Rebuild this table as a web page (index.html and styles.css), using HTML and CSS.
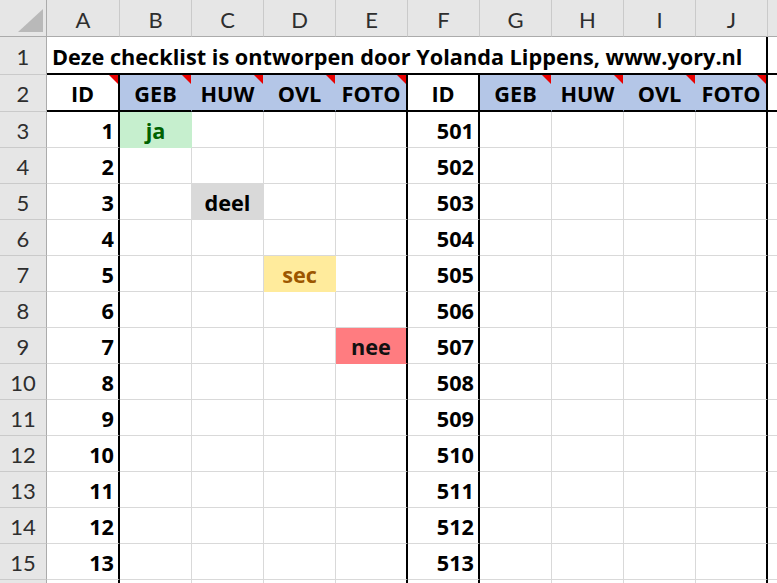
FILE: index.html
```html
<!DOCTYPE html>
<html lang="nl">
<head>
<meta charset="utf-8">
<title>Checklist</title>
<link rel="stylesheet" href="styles.css">
</head>
<body>
<div class="sheet">
  <div class="corner"><svg class="selall" width="46" height="36" viewBox="0 0 46 36"><polygon points="43,9 43,32 18,32" fill="#b9b9b9"/></svg></div>
  <div class="ch">A</div><div class="ch">B</div><div class="ch">C</div><div class="ch">D</div><div class="ch">E</div><div class="ch">F</div><div class="ch">G</div><div class="ch">H</div><div class="ch">I</div><div class="ch">J</div><div class="ch"></div>

  <div class="rh">1</div>
  <div class="c title tr tb">Deze checklist is ontworpen door Yolanda Lippens, www.yory.nl</div>
  <div class="c tb"></div>

  <div class="rh">2</div>
  <div class="c mid tr tb flag">ID</div>
  <div class="c mid blue tb flag">GEB</div>
  <div class="c mid blue tb flag">HUW</div>
  <div class="c mid blue tb flag">OVL</div>
  <div class="c mid blue tr tb flag">FOTO</div>
  <div class="c mid tr tb">ID</div>
  <div class="c mid blue tb flag">GEB</div>
  <div class="c mid blue tb flag">HUW</div>
  <div class="c mid blue tb flag">OVL</div>
  <div class="c mid blue tr tb flag">FOTO</div>
  <div class="c tb"></div>

  <div class="rh">3</div><div class="c num tr">1</div><div class="c mid ja">ja</div><div class="c"></div><div class="c"></div><div class="c tr"></div><div class="c num tr">501</div><div class="c"></div><div class="c"></div><div class="c"></div><div class="c tr"></div><div class="c"></div>
  <div class="rh">4</div><div class="c num tr">2</div><div class="c"></div><div class="c"></div><div class="c"></div><div class="c tr"></div><div class="c num tr">502</div><div class="c"></div><div class="c"></div><div class="c"></div><div class="c tr"></div><div class="c"></div>
  <div class="rh">5</div><div class="c num tr">3</div><div class="c"></div><div class="c mid deel">deel</div><div class="c"></div><div class="c tr"></div><div class="c num tr">503</div><div class="c"></div><div class="c"></div><div class="c"></div><div class="c tr"></div><div class="c"></div>
  <div class="rh">6</div><div class="c num tr">4</div><div class="c"></div><div class="c"></div><div class="c"></div><div class="c tr"></div><div class="c num tr">504</div><div class="c"></div><div class="c"></div><div class="c"></div><div class="c tr"></div><div class="c"></div>
  <div class="rh">7</div><div class="c num tr">5</div><div class="c"></div><div class="c"></div><div class="c mid sec">sec</div><div class="c tr"></div><div class="c num tr">505</div><div class="c"></div><div class="c"></div><div class="c"></div><div class="c tr"></div><div class="c"></div>
  <div class="rh">8</div><div class="c num tr">6</div><div class="c"></div><div class="c"></div><div class="c"></div><div class="c tr"></div><div class="c num tr">506</div><div class="c"></div><div class="c"></div><div class="c"></div><div class="c tr"></div><div class="c"></div>
  <div class="rh">9</div><div class="c num tr">7</div><div class="c"></div><div class="c"></div><div class="c"></div><div class="c mid nee tr">nee</div><div class="c num tr">507</div><div class="c"></div><div class="c"></div><div class="c"></div><div class="c tr"></div><div class="c"></div>
  <div class="rh">10</div><div class="c num tr">8</div><div class="c"></div><div class="c"></div><div class="c"></div><div class="c tr"></div><div class="c num tr">508</div><div class="c"></div><div class="c"></div><div class="c"></div><div class="c tr"></div><div class="c"></div>
  <div class="rh">11</div><div class="c num tr">9</div><div class="c"></div><div class="c"></div><div class="c"></div><div class="c tr"></div><div class="c num tr">509</div><div class="c"></div><div class="c"></div><div class="c"></div><div class="c tr"></div><div class="c"></div>
  <div class="rh">12</div><div class="c num tr">10</div><div class="c"></div><div class="c"></div><div class="c"></div><div class="c tr"></div><div class="c num tr">510</div><div class="c"></div><div class="c"></div><div class="c"></div><div class="c tr"></div><div class="c"></div>
  <div class="rh">13</div><div class="c num tr">11</div><div class="c"></div><div class="c"></div><div class="c"></div><div class="c tr"></div><div class="c num tr">511</div><div class="c"></div><div class="c"></div><div class="c"></div><div class="c tr"></div><div class="c"></div>
  <div class="rh">14</div><div class="c num tr">12</div><div class="c"></div><div class="c"></div><div class="c"></div><div class="c tr"></div><div class="c num tr">512</div><div class="c"></div><div class="c"></div><div class="c"></div><div class="c tr"></div><div class="c"></div>
  <div class="rh">15</div><div class="c num tr">13</div><div class="c"></div><div class="c"></div><div class="c"></div><div class="c tr"></div><div class="c num tr">513</div><div class="c"></div><div class="c"></div><div class="c"></div><div class="c tr"></div><div class="c"></div>
  <div class="rh"></div><div class="c tr"></div><div class="c"></div><div class="c"></div><div class="c"></div><div class="c tr"></div><div class="c tr"></div><div class="c"></div><div class="c"></div><div class="c"></div><div class="c tr"></div><div class="c"></div>
</div>
</body>
</html>
```
FILE: styles.css
```css
* { box-sizing: border-box; margin: 0; padding: 0; }
html, body { width: 777px; height: 583px; overflow: hidden; background: #fff; }
body { font-family: Lato, "Liberation Sans", sans-serif; }

.sheet {
  display: grid;
  grid-template-columns: 47px 73px repeat(9, 72px) 1fr;
  grid-template-rows: 37px 38px 37px repeat(14, 36px);
}

.corner {
  background: #e6e6e6;
  border-right: 1px solid #ababab;
  border-bottom: 1px solid #ababab;
}
.selall { display: block; }

.ch {
  background: #e6e6e6;
  border-right: 1px solid #cacaca;
  border-bottom: 1px solid #ababab;
  display: flex;
  align-items: center;
  justify-content: center;
  padding-top: 3px;
  font-size: 22px;
  color: #2e2e2e;
}

.rh {
  background: #e6e6e6;
  border-right: 1px solid #ababab;
  border-bottom: 1px solid #cacaca;
  display: flex;
  align-items: center;
  justify-content: center;
  padding-top: 1px;
  font-size: 22px;
  color: #2e2e2e;
}

.c {
  position: relative;
  display: flex;
  align-items: center;
  padding: 2px 5px 0;
  border-right: 1px solid #d9d9d9;
  border-bottom: 1px solid #d9d9d9;
  font-family: "Open Sans", Lato, sans-serif;
  font-size: 21.7px;
  font-weight: 700;
  color: #000;
  white-space: nowrap;
}

.title { grid-column: span 10; }
.num { justify-content: flex-end; padding-right: 4px; }
.mid { justify-content: center; }

.blue { background: #b4c6e7; border-right-color: #b4c6e7; }
.ja { background: #c6efce; color: #006100; border-color: #c6efce; }
.deel { background: #d9d9d9; border-color: #d9d9d9; }
.sec { background: #ffeb9c; color: #9c5700; border-color: #ffeb9c; }
.nee { background: #ff7c80; color: #111; border-bottom-color: #ff7c80; }

.tr { border-right: 2px solid #000; }
.tb { border-bottom: 2px solid #000; }

.flag::after {
  content: "";
  position: absolute;
  top: 0;
  right: 0;
  width: 0;
  height: 0;
  border-top: 9px solid #e80000;
  border-left: 9px solid transparent;
}
```
